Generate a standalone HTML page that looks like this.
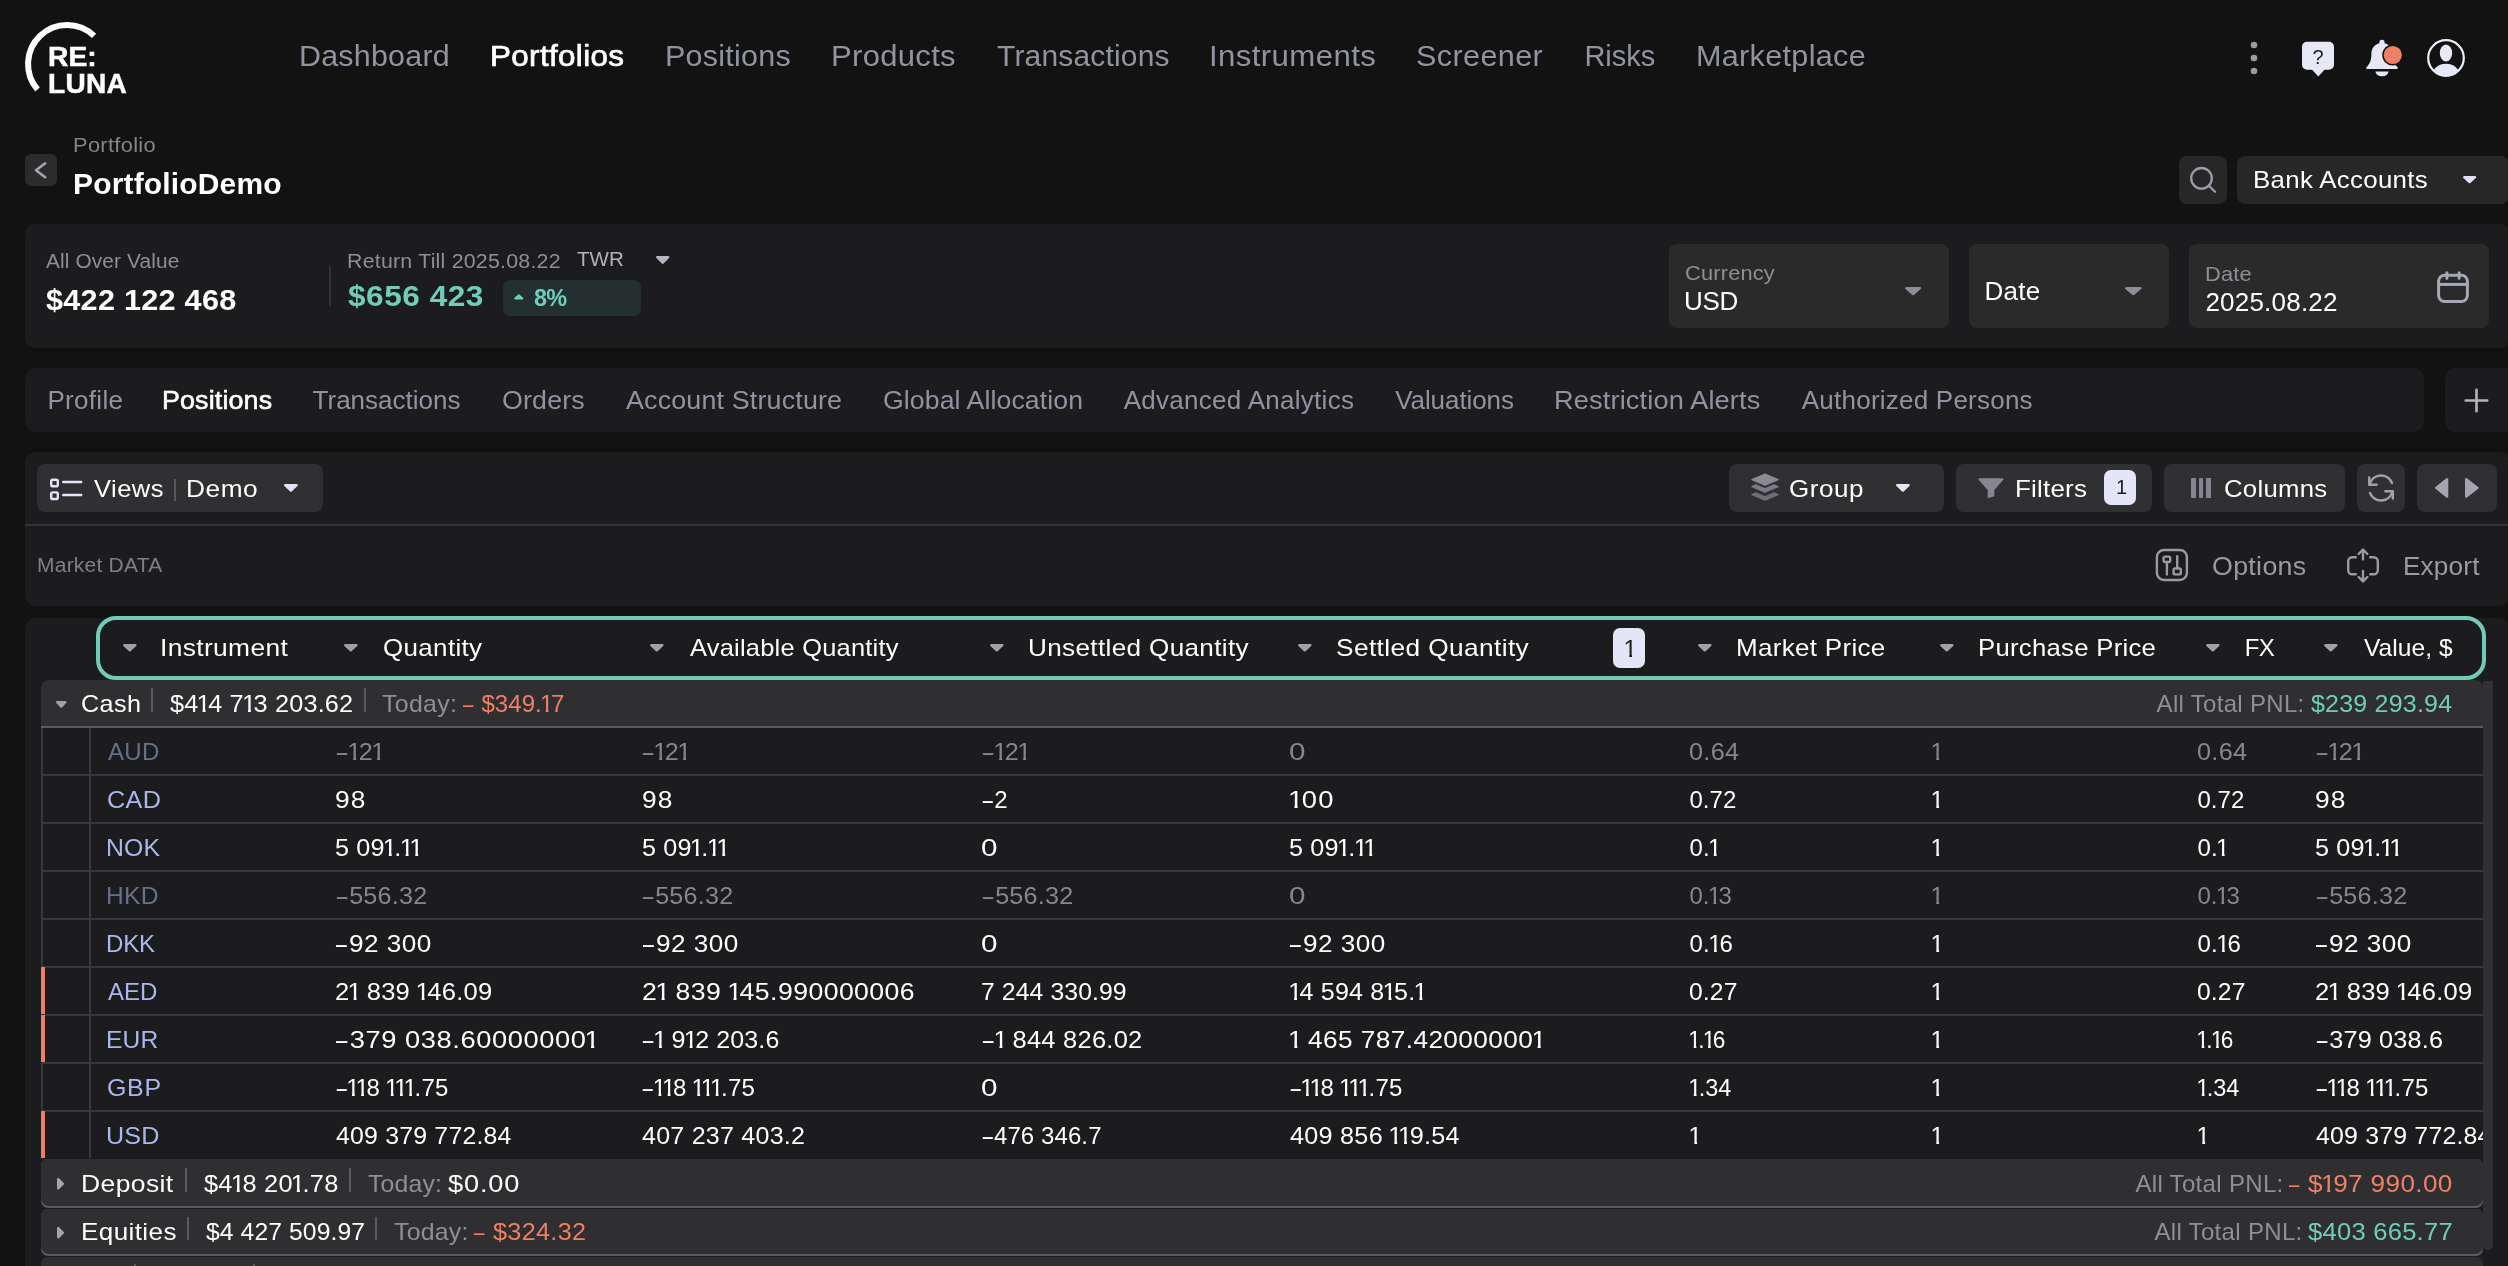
<!DOCTYPE html><html lang="en"><head><meta charset="utf-8"><title>Portfolio Positions</title><style>html,body{margin:0;padding:0}body{width:2508px;height:1266px;overflow:hidden;background:#121212;position:relative;font-family:"Liberation Sans",sans-serif}
.s{position:absolute;display:block}.t{position:absolute;white-space:pre;line-height:1;margin:0}#tx,.L{position:absolute;left:0;top:0;width:2508px;height:1266px;will-change:transform}
.clip{position:absolute;overflow:hidden}.t b{font-weight:inherit;display:inline-block;transform:scaleX(1.700);transform-origin:0 50%;margin-right:.22em}.t i{font-style:normal;display:inline-block;margin:0 -.105em 0 -.075em;clip-path:polygon(0 0,24px 0,24px 18px,8.500px 18px,8.500px 24px,5.700px 24px,5.700px 18px,0 18px)}</style></head><body>
<header class="L" aria-label="Main navigation">
<svg class="s" style="left:0px;top:0px" width="140" height="110" viewBox="0 0 140 110"><path d="M94.09 35.95 A39 39 0 0 0 37.57 89.59" fill="none" stroke="#fff" stroke-width="6"/></svg>
<svg class="s" style="left:2250px;top:41px" width="8" height="8" viewBox="0 0 8 8"><circle cx="4" cy="4" r="3.3" fill="#9a9aa2"/></svg>
<svg class="s" style="left:2250px;top:54px" width="8" height="8" viewBox="0 0 8 8"><circle cx="4" cy="4" r="3.3" fill="#9a9aa2"/></svg>
<svg class="s" style="left:2250px;top:67px" width="8" height="8" viewBox="0 0 8 8"><circle cx="4" cy="4" r="3.3" fill="#9a9aa2"/></svg>
<svg class="s" style="left:2300px;top:40px" width="36" height="38" viewBox="0 0 36 38"><path d="M7 1.7h22a5 5 0 0 1 5 5v18a5 5 0 0 1-5 5h-4.5l-6.2 6.8-6.2-6.8H7a5 5 0 0 1-5-5v-18a5 5 0 0 1 5-5z" fill="#e6e8f5"/></svg>
<svg class="s" style="left:2362px;top:38px" width="40" height="40" viewBox="0 0 40 40"><path d="M20 1.8a2.6 2.6 0 0 1 2.6 2.6v.9c5 1.2 8 5.400 8 10.700 0 7.200 2.200 10.500 5 13.200.6.600.2 1.800-.8 1.800H5.200c-1 0-1.400-1.200-.8-1.800 2.800-2.700 5-6 5-13.200 0-5.300 3-9.500 8-10.700v-.9A2.600 2.600 0 0 1 20 1.800z" fill="#e6e8f5"/>
<path d="M13.500 33.500h13a6.500 4.800 0 0 1-13 0z" fill="#e6e8f5"/>
<circle cx="30.800" cy="17" r="10.600" fill="#121212"/><circle cx="30.800" cy="17" r="9.100" fill="#ee8068"/></svg>
<svg class="s" style="left:2425px;top:37px" width="42" height="42" viewBox="0 0 42 42"><defs><clipPath id="uc"><circle cx="21" cy="21" r="17.200"/></clipPath></defs>
<circle cx="21" cy="21" r="17.800" fill="none" stroke="#eceef8" stroke-width="2.200"/>
<ellipse cx="21" cy="16" rx="6.200" ry="8.600" fill="#e6e8f5"/>
<ellipse cx="21" cy="38" rx="13.500" ry="11.200" fill="#e6e8f5" clip-path="url(#uc)"/></svg>
<span class="t" style="left:47.60px;top:44px;font-size:27px;color:#ffffff;font-weight:700;letter-spacing:0.025px;-webkit-text-stroke:0.5px #ffffff;transform:scaleX(1.0453);transform-origin:0 0;">RE:</span>
<span class="t" style="left:47.60px;top:71px;font-size:27px;color:#ffffff;font-weight:700;letter-spacing:0.265px;-webkit-text-stroke:0.5px #ffffff;transform:scaleX(1.0379);transform-origin:0 0;">LUNA</span>
<span class="t" style="left:299.40px;top:42px;font-size:29px;color:#9194a0;letter-spacing:0.230px;transform:scaleX(1.0484);transform-origin:0 0;">Dashboard</span>
<span class="t" style="left:490.10px;top:42px;font-size:29px;color:#ffffff;letter-spacing:0.336px;-webkit-text-stroke:0.7px #ffffff;transform:scaleX(1.0817);transform-origin:0 0;">Portfolios</span>
<span class="t" style="left:664.60px;top:42px;font-size:29px;color:#9194a0;letter-spacing:0.238px;transform:scaleX(1.0522);transform-origin:0 0;">Positions</span>
<span class="t" style="left:831.40px;top:42px;font-size:29px;color:#9194a0;letter-spacing:0.303px;transform:scaleX(1.0688);transform-origin:0 0;">Products</span>
<span class="t" style="left:997.29px;top:42px;font-size:29px;color:#9194a0;letter-spacing:0.181px;transform:scaleX(1.0335);transform-origin:0 0;">Transactions</span>
<span class="t" style="left:1209.07px;top:42px;font-size:29px;color:#9194a0;letter-spacing:0.359px;transform:scaleX(1.0753);transform-origin:0 0;">Instruments</span>
<span class="t" style="left:1416.35px;top:42px;font-size:29px;color:#9194a0;letter-spacing:0.359px;transform:scaleX(1.0547);transform-origin:0 0;">Screener</span>
<span class="t" style="left:1584.40px;top:42px;font-size:29px;color:#9194a0;letter-spacing:-0.037px;">Risks</span>
<span class="t" style="left:1696.40px;top:42px;font-size:29px;color:#9194a0;letter-spacing:0.297px;transform:scaleX(1.0542);transform-origin:0 0;">Marketplace</span>
<span class="t" style="left:2312.47px;top:47px;font-size:20px;color:#1c1c1e;">?</span>
</header>
<section class="L" aria-label="Portfolio title">
<div class="s" style="left:25px;top:154px;width:32px;height:32px;background:#2c2c2e;border-radius:6px;"></div>
<svg class="s" style="left:25px;top:154px" width="32" height="32" viewBox="0 0 32 32"><path d="M20.200 9.300 11 16.300l9.200 6.900" fill="none" stroke="#a4a4b0" stroke-width="2.600" stroke-linecap="round" stroke-linejoin="round"/></svg>
<div class="s" style="left:2179px;top:156px;width:48px;height:48px;background:#272728;border-radius:8px;"></div>
<svg class="s" style="left:2179px;top:156px" width="48" height="48" viewBox="0 0 48 48"><circle cx="22.500" cy="22.300" r="10.300" fill="none" stroke="#9c9ca6" stroke-width="2.300"/><path d="M30 29.800l6 6" stroke="#9c9ca6" stroke-width="2.300" stroke-linecap="round"/></svg>
<div class="s" style="left:2237px;top:156px;width:272px;height:48px;background:#272728;border-radius:8px;"></div>
<svg class="s" style="left:2461.5px;top:175.4px" width="15.2" height="9.3" viewBox="0 0 15.2 9.3"><polygon points="2.2,2.2 13.00,2.2 7.60,7.10" fill="#dfe1f5" stroke="#dfe1f5" stroke-width="2.4" stroke-linejoin="round"/></svg>
<span class="t" style="left:73.07px;top:135px;font-size:20px;color:#85858d;letter-spacing:0.285px;transform:scaleX(1.0922);transform-origin:0 0;">Portfolio</span>
<span class="t" style="left:72.80px;top:170px;font-size:29px;color:#ffffff;font-weight:700;letter-spacing:0.175px;transform:scaleX(1.0331);transform-origin:0 0;">PortfolioDemo</span>
<span class="t" style="left:2252.80px;top:168px;font-size:24px;color:#ffffff;letter-spacing:0.299px;transform:scaleX(1.0757);transform-origin:0 0;">Bank Accounts</span>
</section>
<section class="L" aria-label="Portfolio summary">
<div class="s" style="left:25px;top:224px;width:2484px;height:124px;background:#1c1c1e;border-radius:9px;"></div>
<div class="s" style="left:329.3px;top:266px;width:2.0px;height:40px;background:#333337;"></div>
<svg class="s" style="left:655.4px;top:255px" width="15.4" height="9.9" viewBox="0 0 15.4 9.9"><polygon points="2.2,2.2 13.20,2.2 7.70,7.70" fill="#b6b6c0" stroke="#b6b6c0" stroke-width="2.4" stroke-linejoin="round"/></svg>
<div class="s" style="left:503.2px;top:279.8px;width:137.9px;height:36.2px;background:#23302f;border-radius:7px;"></div>
<svg class="s" style="left:513.4px;top:293.4px" width="11.5" height="7.6" viewBox="0 0 11.5 7.6"><polygon points="2.2,5.40 9.30,5.40 5.75,2.2" fill="#6fcdb9" stroke="#6fcdb9" stroke-width="2" stroke-linejoin="round"/></svg>
<div class="s" style="left:1668.7px;top:244.2px;width:280.3px;height:83.8px;background:#2a2a2a;border-radius:8px;"></div>
<svg class="s" style="left:1903.8px;top:285.8px" width="18.2" height="10.3" viewBox="0 0 18.2 10.3"><polygon points="2.2,2.2 16.00,2.2 9.10,8.10" fill="#8e8e96" stroke="#8e8e96" stroke-width="2.4" stroke-linejoin="round"/></svg>
<div class="s" style="left:1968.8px;top:244.2px;width:200.2px;height:83.8px;background:#2a2a2a;border-radius:8px;"></div>
<svg class="s" style="left:2123.6px;top:285.8px" width="18.6" height="10.3" viewBox="0 0 18.6 10.3"><polygon points="2.2,2.2 16.40,2.2 9.30,8.10" fill="#8e8e96" stroke="#8e8e96" stroke-width="2.4" stroke-linejoin="round"/></svg>
<div class="s" style="left:2189.3px;top:244.2px;width:299.7px;height:83.8px;background:#2a2a2a;border-radius:8px;"></div>
<svg class="s" style="left:2433px;top:268px" width="40" height="38" viewBox="0 0 40 38"><rect x="5.600" y="7.300" width="28.800" height="26.200" rx="6" fill="none" stroke="#a6a8b4" stroke-width="3"/>
<path d="M5.600 16.400h28.800" stroke="#a6a8b4" stroke-width="3"/>
<path d="M13.900 4.700v5.600M26.100 4.700v5.600" stroke="#a6a8b4" stroke-width="3" stroke-linecap="round"/></svg>
<span class="t" style="left:46.40px;top:251px;font-size:20px;color:#8e8e96;letter-spacing:0.129px;transform:scaleX(1.0413);transform-origin:0 0;">All Over Value</span>
<span class="t" style="left:45.75px;top:286px;font-size:29px;color:#ffffff;font-weight:700;letter-spacing:0.248px;transform:scaleX(1.0560);transform-origin:0 0;">$422 122 468</span>
<span class="t" style="left:346.71px;top:251px;font-size:20px;color:#8e8e96;letter-spacing:0.207px;transform:scaleX(1.0674);transform-origin:0 0;">Return Till 2025.08.22</span>
<span class="t" style="left:576.70px;top:249px;font-size:20px;color:#b2b2ba;letter-spacing:0.042px;transform:scaleX(1.0278);transform-origin:0 0;">TWR</span>
<span class="t" style="left:347.75px;top:282px;font-size:29px;color:#6fcdb9;font-weight:700;letter-spacing:0.486px;transform:scaleX(1.0888);transform-origin:0 0;">$656 423</span>
<span class="t" style="left:534.15px;top:286px;font-size:24px;color:#6fcdb9;font-weight:700;letter-spacing:-0.754px;transform:scaleX(0.9746);transform-origin:0 0;">8%</span>
<span class="t" style="left:1685.10px;top:262px;font-size:21px;color:#8e8e96;letter-spacing:0.166px;transform:scaleX(1.0395);transform-origin:0 0;">Currency</span>
<span class="t" style="left:1684.10px;top:288px;font-size:26px;color:#ffffff;letter-spacing:-0.304px;">USD</span>
<span class="t" style="left:1984.40px;top:278px;font-size:26px;color:#ffffff;letter-spacing:0.333px;">Date</span>
<span class="t" style="left:2204.67px;top:263px;font-size:21px;color:#8e8e96;letter-spacing:0.121px;transform:scaleX(1.0423);transform-origin:0 0;">Date</span>
<span class="t" style="left:2205.40px;top:289px;font-size:26px;color:#ffffff;letter-spacing:0.222px;">2025.08.22</span>
</section>
<nav class="L" aria-label="Portfolio tabs">
<div class="s" style="left:25px;top:368.3px;width:2399.3px;height:63.4px;background:#1c1c1e;border-radius:10px;"></div>
<div class="s" style="left:2445px;top:368.3px;width:75px;height:63.4px;background:#1c1c1e;border-radius:10px;"></div>
<svg class="s" style="left:2464px;top:388px" width="25" height="25" viewBox="0 0 25 25"><path d="M12.500 1.700v21.600M1.700 12.500h21.600" stroke="#b4b4bc" stroke-width="2.600" stroke-linecap="round"/></svg>
<span class="t" style="left:47.40px;top:387px;font-size:26px;color:#9194a0;letter-spacing:0.318px;">Profile</span>
<span class="t" style="left:161.85px;top:387px;font-size:26px;color:#ffffff;letter-spacing:0.148px;-webkit-text-stroke:0.6px #ffffff;transform:scaleX(1.0319);transform-origin:0 0;">Positions</span>
<span class="t" style="left:312.59px;top:387px;font-size:26px;color:#9194a0;">Transactions</span>
<span class="t" style="left:501.70px;top:387px;font-size:26px;color:#9194a0;letter-spacing:0.205px;transform:scaleX(1.0279);transform-origin:0 0;">Orders</span>
<span class="t" style="left:626.40px;top:387px;font-size:26px;color:#9194a0;letter-spacing:0.161px;transform:scaleX(1.0324);transform-origin:0 0;">Account Structure</span>
<span class="t" style="left:882.70px;top:387px;font-size:26px;color:#9194a0;letter-spacing:0.080px;transform:scaleX(1.0258);transform-origin:0 0;">Global Allocation</span>
<span class="t" style="left:1123.70px;top:387px;font-size:26px;color:#9194a0;letter-spacing:0.281px;">Advanced Analytics</span>
<span class="t" style="left:1395.20px;top:387px;font-size:26px;color:#9194a0;letter-spacing:-0.076px;">Valuations</span>
<span class="t" style="left:1553.80px;top:387px;font-size:26px;color:#9194a0;letter-spacing:0.129px;transform:scaleX(1.0460);transform-origin:0 0;">Restriction Alerts</span>
<span class="t" style="left:1801.80px;top:387px;font-size:26px;color:#9194a0;letter-spacing:0.230px;">Authorized Persons</span>
</nav>
<section class="L" aria-label="Table toolbar">
<div class="s" style="left:25px;top:452px;width:2484px;height:153.7px;background:#1c1c1e;border-radius:10px;"></div>
<div class="s" style="left:25px;top:524px;width:2484px;height:2px;background:#333336;"></div>
<div class="s" style="left:37px;top:464px;width:286px;height:48px;background:#303032;border-radius:8px;"></div>
<svg class="s" style="left:46px;top:474px" width="40" height="30" viewBox="0 0 40 30"><rect x="5.200" y="5.700" width="6.600" height="6.600" rx="1.600" fill="none" stroke="#e2e4f6" stroke-width="2.400"/>
<rect x="5.200" y="18.400" width="6.600" height="6.600" rx="1.600" fill="none" stroke="#e2e4f6" stroke-width="2.400"/>
<path d="M17.200 8h18M17.200 21h18" stroke="#e2e4f6" stroke-width="2.400" stroke-linecap="round"/></svg>
<div class="s" style="left:174.3px;top:478.7px;width:1.7px;height:22.0px;background:#57575d;"></div>
<svg class="s" style="left:283.2px;top:483.2px" width="15.8" height="9.8" viewBox="0 0 15.8 9.8"><polygon points="2.2,2.2 13.60,2.2 7.90,7.60" fill="#e2e4f6" stroke="#e2e4f6" stroke-width="2.4" stroke-linejoin="round"/></svg>
<div class="s" style="left:1729px;top:464px;width:215px;height:48px;background:#303032;border-radius:8px;"></div>
<svg class="s" style="left:1750px;top:472px" width="30" height="32" viewBox="0 0 30 32"><path d="M15 2.100 28 7.600 15 13.100 2 7.600z" fill="#8a8a92" stroke="#8a8a92" stroke-width="1.500" stroke-linejoin="round"/>
<path d="M2 14.600l3.800-1.600 9.200 3.900 9.200-3.900 3.800 1.600-13 5.500z" fill="#7c7c84" stroke="#7c7c84" stroke-width="1.500" stroke-linejoin="round"/>
<path d="M2 22.600l3.800-1.600 9.200 3.900 9.200-3.900 3.800 1.600-13 5.500z" fill="#6e6e76" stroke="#6e6e76" stroke-width="1.500" stroke-linejoin="round"/></svg>
<svg class="s" style="left:1895px;top:483.2px" width="15.8" height="9.8" viewBox="0 0 15.8 9.8"><polygon points="2.2,2.2 13.60,2.2 7.90,7.60" fill="#e2e4f6" stroke="#e2e4f6" stroke-width="2.4" stroke-linejoin="round"/></svg>
<div class="s" style="left:1956px;top:464px;width:196px;height:48px;background:#303032;border-radius:8px;"></div>
<svg class="s" style="left:1976px;top:476px" width="30" height="24" viewBox="0 0 30 24"><path d="M3.400 2.200h23.200a1 1 0 0 1 .8 1.600L18.300 14v6.200l-6.600 2V14L2.600 3.800a1 1 0 0 1 .8-1.600z" fill="#86868e"/></svg>
<div class="s" style="left:2103.8px;top:469.7px;width:32.4px;height:35.8px;background:#e4e6f7;border-radius:7px;"></div>
<div class="s" style="left:2164.2px;top:464px;width:180.8px;height:48px;background:#303032;border-radius:8px;"></div>
<div class="s" style="left:2191.2px;top:478.3px;width:4.6px;height:19.5px;background:#86868e;border-radius:1px;"></div>
<div class="s" style="left:2198.8px;top:478.3px;width:4.6px;height:19.5px;background:#86868e;border-radius:1px;"></div>
<div class="s" style="left:2206.2px;top:478.3px;width:4.6px;height:19.5px;background:#86868e;border-radius:1px;"></div>
<div class="s" style="left:2357px;top:464px;width:48px;height:48px;background:#303032;border-radius:8px;"></div>
<svg class="s" style="left:2357px;top:464px" width="48" height="48" viewBox="0 0 48 48"><g fill="none" stroke="#a0a0aa" stroke-width="2.500" stroke-linecap="round" stroke-linejoin="round">
<path d="M12.600 20.500a11.800 11.800 0 0 1 22.400-1.500"/><path d="M35.400 27.500a11.800 11.800 0 0 1-22.400 1.500"/>
<path d="M12.200 13.400v7.400h7.400"/><path d="M35.800 34.600v-7.400h-7.400"/></g></svg>
<div class="s" style="left:2417px;top:464px;width:80px;height:48px;background:#303032;border-radius:8px;"></div>
<svg class="s" style="left:2434px;top:477.3px" width="15.3" height="21.7" viewBox="0 0 15.3 21.7"><polygon points="13.10,2.2 13.10,19.50 2.2,10.85" fill="#a4a4ae" stroke="#a4a4ae" stroke-width="2.4" stroke-linejoin="round"/></svg>
<svg class="s" style="left:2464px;top:477.3px" width="15.7" height="21.7" viewBox="0 0 15.7 21.7"><polygon points="2.2,2.2 2.2,19.50 13.50,10.85" fill="#a4a4ae" stroke="#a4a4ae" stroke-width="2.4" stroke-linejoin="round"/></svg>
<svg class="s" style="left:2154px;top:547px" width="36" height="36" viewBox="0 0 36 36"><g fill="none" stroke="#9a9aa4" stroke-width="2.400" stroke-linecap="round" stroke-linejoin="round">
<rect x="2.900" y="3" width="30" height="30" rx="7"/>
<rect x="9.600" y="9.600" width="6.600" height="5.400" rx="1.500"/><path d="M12.900 15v12.400"/>
<path d="M23.200 9.200v12.200"/><rect x="19.600" y="21.400" width="7.200" height="6" rx="1.500"/></g></svg>
<svg class="s" style="left:2345px;top:546px" width="36" height="38" viewBox="0 0 36 38"><g fill="none" stroke="#9a9aa4" stroke-width="2.400" stroke-linecap="round" stroke-linejoin="round">
<path d="M10.800 11.200H7.200a4 4 0 0 0-4 4v9a4 4 0 0 0 4 4h3.600"/><path d="M25.200 11.200h3.600a4 4 0 0 1 4 4v9a4 4 0 0 1-4 4h-3.600"/>
<path d="M18 3.600v9.800M13.600 8 18 3.600l4.400 4.400"/><path d="M18 25v10.400M13.600 31 18 35.400l4.400-4.400"/></g></svg>
<span class="t" style="left:94.10px;top:477px;font-size:24px;color:#ffffff;letter-spacing:0.407px;transform:scaleX(1.0655);transform-origin:0 0;">Views</span>
<span class="t" style="left:186.40px;top:477px;font-size:24px;color:#ffffff;letter-spacing:0.526px;transform:scaleX(1.0925);transform-origin:0 0;">Demo</span>
<span class="t" style="left:36.74px;top:555px;font-size:20px;color:#7f7f87;letter-spacing:0.210px;transform:scaleX(1.0505);transform-origin:0 0;">Market DATA</span>
<span class="t" style="left:1788.80px;top:477px;font-size:24px;color:#ffffff;letter-spacing:0.500px;transform:scaleX(1.0831);transform-origin:0 0;">Group</span>
<span class="t" style="left:2015.40px;top:477px;font-size:24px;color:#ffffff;letter-spacing:0.215px;transform:scaleX(1.0789);transform-origin:0 0;">Filters</span>
<span class="t" style="left:2116.10px;top:477px;font-size:20px;color:#1c1c1e;">1</span>
<span class="t" style="left:2224.40px;top:477px;font-size:24px;color:#ffffff;letter-spacing:0.290px;transform:scaleX(1.0702);transform-origin:0 0;">Columns</span>
<span class="t" style="left:2212.30px;top:554px;font-size:25px;color:#9a9aa4;letter-spacing:0.312px;transform:scaleX(1.0701);transform-origin:0 0;">Options</span>
<span class="t" style="left:2403.00px;top:554px;font-size:25px;color:#9a9aa4;letter-spacing:0.162px;transform:scaleX(1.0457);transform-origin:0 0;">Export</span>
</section>
<main class="L" aria-label="Positions table">
<div class="s" style="left:25px;top:618px;width:2484px;height:662px;background:#1c1c1e;border-radius:10px;"></div>
<div class="s" style="left:2483px;top:681px;width:10px;height:569px;background:#303032;border-radius:0 0 5px 5px;"></div>
<div class="s" style="left:41px;top:680px;width:2442px;height:48px;background:#2f2f31;border-radius:8px 8px 0 0;"></div>
<div class="s" style="left:41px;top:726px;width:2442px;height:2px;background:#5a5a62;"></div>
<svg class="s" style="left:54.7px;top:699.7px" width="12.5" height="8.8" viewBox="0 0 12.5 8.8"><polygon points="2.2,2.2 10.30,2.2 6.25,6.60" fill="#a0a0aa" stroke="#a0a0aa" stroke-width="2.4" stroke-linejoin="round"/></svg>
<div class="s" style="left:151px;top:688px;width:2px;height:23.5px;background:#5a5a62;"></div>
<div class="s" style="left:364px;top:688px;width:2px;height:23.5px;background:#5a5a62;"></div>
<div class="s" style="left:96.200px;top:615.700px;width:2390px;height:64.300px;box-sizing:border-box;border:4px solid #70ccb9;border-radius:20px;background:#1c1c1e"></div>
<svg class="s" style="left:121.5px;top:643.2px" width="15.6" height="9.5" viewBox="0 0 15.6 9.5"><polygon points="2.2,2.2 13.40,2.2 7.80,7.30" fill="#a0a0aa" stroke="#a0a0aa" stroke-width="2.4" stroke-linejoin="round"/></svg>
<svg class="s" style="left:343.2px;top:643.2px" width="15.6" height="9.5" viewBox="0 0 15.6 9.5"><polygon points="2.2,2.2 13.40,2.2 7.80,7.30" fill="#a0a0aa" stroke="#a0a0aa" stroke-width="2.4" stroke-linejoin="round"/></svg>
<svg class="s" style="left:649px;top:643.2px" width="15.6" height="9.5" viewBox="0 0 15.6 9.5"><polygon points="2.2,2.2 13.40,2.2 7.80,7.30" fill="#a0a0aa" stroke="#a0a0aa" stroke-width="2.4" stroke-linejoin="round"/></svg>
<svg class="s" style="left:989px;top:643.2px" width="15.6" height="9.5" viewBox="0 0 15.6 9.5"><polygon points="2.2,2.2 13.40,2.2 7.80,7.30" fill="#a0a0aa" stroke="#a0a0aa" stroke-width="2.4" stroke-linejoin="round"/></svg>
<svg class="s" style="left:1297.3px;top:643.2px" width="15.6" height="9.5" viewBox="0 0 15.6 9.5"><polygon points="2.2,2.2 13.40,2.2 7.80,7.30" fill="#a0a0aa" stroke="#a0a0aa" stroke-width="2.4" stroke-linejoin="round"/></svg>
<svg class="s" style="left:1697.3px;top:643.2px" width="15.6" height="9.5" viewBox="0 0 15.6 9.5"><polygon points="2.2,2.2 13.40,2.2 7.80,7.30" fill="#a0a0aa" stroke="#a0a0aa" stroke-width="2.4" stroke-linejoin="round"/></svg>
<svg class="s" style="left:1939px;top:643.2px" width="15.6" height="9.5" viewBox="0 0 15.6 9.5"><polygon points="2.2,2.2 13.40,2.2 7.80,7.30" fill="#a0a0aa" stroke="#a0a0aa" stroke-width="2.4" stroke-linejoin="round"/></svg>
<svg class="s" style="left:2205px;top:643.2px" width="15.6" height="9.5" viewBox="0 0 15.6 9.5"><polygon points="2.2,2.2 13.40,2.2 7.80,7.30" fill="#a0a0aa" stroke="#a0a0aa" stroke-width="2.4" stroke-linejoin="round"/></svg>
<svg class="s" style="left:2322.8px;top:643.2px" width="15.6" height="9.5" viewBox="0 0 15.6 9.5"><polygon points="2.2,2.2 13.40,2.2 7.80,7.30" fill="#a0a0aa" stroke="#a0a0aa" stroke-width="2.4" stroke-linejoin="round"/></svg>
<div class="s" style="left:1612.7px;top:628.3px;width:32.3px;height:39.4px;background:#e4e6f7;border-radius:7px;"></div>
<div class="s" style="left:41px;top:728px;width:2px;height:430px;background:#38383b;"></div>
<div class="s" style="left:89px;top:728px;width:2px;height:430px;background:#38383b;"></div>
<div class="s" style="left:41px;top:774px;width:2442px;height:2px;background:#38383b;"></div>
<div class="s" style="left:41px;top:822px;width:2442px;height:2px;background:#38383b;"></div>
<div class="s" style="left:41px;top:870px;width:2442px;height:2px;background:#38383b;"></div>
<div class="s" style="left:41px;top:918px;width:2442px;height:2px;background:#38383b;"></div>
<div class="s" style="left:41px;top:966px;width:2442px;height:2px;background:#38383b;"></div>
<div class="s" style="left:41px;top:1014px;width:2442px;height:2px;background:#38383b;"></div>
<div class="s" style="left:41px;top:967px;width:4px;height:47px;background:#ee7f66;"></div>
<div class="s" style="left:41px;top:1062px;width:2442px;height:2px;background:#38383b;"></div>
<div class="s" style="left:41px;top:1015px;width:4px;height:47px;background:#ee7f66;"></div>
<div class="s" style="left:41px;top:1110px;width:2442px;height:2px;background:#38383b;"></div>
<div class="s" style="left:41px;top:1111px;width:4px;height:47px;background:#ee7f66;"></div>
<div class="s" style="left:41px;top:1158.5px;width:2442px;height:49.3px;background:#5a5a62;border-radius:7px;"></div>
<div class="s" style="left:41px;top:1158.5px;width:2442px;height:47.3px;background:#2f2f31;border-radius:7px 7px 8px 8px;"></div>
<svg class="s" style="left:56.2px;top:1177.3px" width="9.1" height="13.5" viewBox="0 0 9.1 13.5"><polygon points="2.2,2.2 2.2,11.30 6.90,6.75" fill="#a4a4ae" stroke="#a4a4ae" stroke-width="2.4" stroke-linejoin="round"/></svg>
<div class="s" style="left:185px;top:1168.4px;width:2px;height:23.4px;background:#5a5a62;"></div>
<div class="s" style="left:349px;top:1168.4px;width:2px;height:23.4px;background:#5a5a62;"></div>
<div class="s" style="left:41px;top:1208.6px;width:2442px;height:47.0px;background:#5a5a62;border-radius:7px;"></div>
<div class="s" style="left:41px;top:1208.6px;width:2442px;height:45.0px;background:#2f2f31;border-radius:7px 7px 8px 8px;"></div>
<svg class="s" style="left:56.2px;top:1225.7px" width="9.1" height="13.5" viewBox="0 0 9.1 13.5"><polygon points="2.2,2.2 2.2,11.30 6.90,6.75" fill="#a4a4ae" stroke="#a4a4ae" stroke-width="2.4" stroke-linejoin="round"/></svg>
<div class="s" style="left:187px;top:1216.5px;width:2px;height:23.7px;background:#5a5a62;"></div>
<div class="s" style="left:375px;top:1216.5px;width:2px;height:23.7px;background:#5a5a62;"></div>
<div class="s" style="left:41px;top:1257px;width:2442px;height:43px;background:#2f2f31;border-radius:7px 7px 0 0;"></div>
<div class="s" style="left:134px;top:1263.5px;width:2px;height:26.5px;background:#5a5a62;"></div>
<div class="s" style="left:253px;top:1263.5px;width:2px;height:26.5px;background:#5a5a62;"></div>
<span class="t" style="left:81.10px;top:692px;font-size:24px;color:#ffffff;letter-spacing:0.425px;transform:scaleX(1.0486);transform-origin:0 0;">Cash</span>
<span class="t" style="left:170.40px;top:692px;font-size:24px;color:#ffffff;letter-spacing:0.170px;transform:scaleX(1.0526);transform-origin:0 0;">$4<i>1</i>4 7<i>1</i>3 203.62</span>
<span class="t" style="left:382.40px;top:692px;font-size:24px;color:#8e8e96;letter-spacing:0.300px;transform:scaleX(1.0370);transform-origin:0 0;">Today:</span>
<span class="t" style="left:462.90px;top:692px;font-size:24px;color:#ee7f66;transform:scaleX(0.7834);transform-origin:0 0;">–</span>
<span class="t" style="left:481.40px;top:692px;font-size:24px;color:#ee7f66;letter-spacing:0.068px;">$349.<i>1</i>7</span>
<span class="t" style="left:2156.60px;top:692px;font-size:24px;color:#8e8e96;letter-spacing:0.308px;">All Total PNL:</span>
<span class="t" style="left:2310.80px;top:692px;font-size:24px;color:#6fcdb9;letter-spacing:0.201px;transform:scaleX(1.0412);transform-origin:0 0;">$239 293.94</span>
<span class="t" style="left:160.40px;top:636px;font-size:24px;color:#ffffff;letter-spacing:0.325px;transform:scaleX(1.0988);transform-origin:0 0;">Instrument</span>
<span class="t" style="left:383.10px;top:636px;font-size:24px;color:#ffffff;letter-spacing:0.313px;transform:scaleX(1.0821);transform-origin:0 0;">Quantity</span>
<span class="t" style="left:690.40px;top:636px;font-size:24px;color:#ffffff;letter-spacing:0.224px;transform:scaleX(1.0591);transform-origin:0 0;">Available Quantity</span>
<span class="t" style="left:1028.40px;top:636px;font-size:24px;color:#ffffff;letter-spacing:0.312px;transform:scaleX(1.0881);transform-origin:0 0;">Unsettled Quantity</span>
<span class="t" style="left:1336.20px;top:636px;font-size:24px;color:#ffffff;letter-spacing:0.364px;transform:scaleX(1.0935);transform-origin:0 0;">Settled Quantity</span>
<span class="t" style="left:1736.10px;top:636px;font-size:24px;color:#ffffff;letter-spacing:0.293px;transform:scaleX(1.0820);transform-origin:0 0;">Market Price</span>
<span class="t" style="left:1978.40px;top:636px;font-size:24px;color:#ffffff;letter-spacing:0.269px;transform:scaleX(1.0700);transform-origin:0 0;">Purchase Price</span>
<span class="t" style="left:2244.65px;top:636px;font-size:24px;color:#ffffff;letter-spacing:-0.431px;">FX</span>
<span class="t" style="left:2364.20px;top:636px;font-size:24px;color:#ffffff;letter-spacing:0.063px;transform:scaleX(1.0227);transform-origin:0 0;">Value, $</span>
<span class="t" style="left:1625.40px;top:637px;font-size:24px;color:#1c1c1e;"><i>1</i></span>
<span class="t" style="left:107.90px;top:740px;font-size:24px;color:#66708c;letter-spacing:0.437px;">AUD</span>
<span class="t" style="left:334.55px;top:740px;font-size:24px;color:#86868c;letter-spacing:0.217px;transform:scaleX(1.0476);transform-origin:0 0;"><b>-</b><i>1</i>2<i>1</i></span>
<span class="t" style="left:641.05px;top:740px;font-size:24px;color:#86868c;letter-spacing:0.217px;transform:scaleX(1.0476);transform-origin:0 0;"><b>-</b><i>1</i>2<i>1</i></span>
<span class="t" style="left:980.55px;top:740px;font-size:24px;color:#86868c;letter-spacing:0.217px;transform:scaleX(1.0476);transform-origin:0 0;"><b>-</b><i>1</i>2<i>1</i></span>
<span class="t" style="left:1289.40px;top:740px;font-size:24px;color:#86868c;transform:scaleX(1.2342);transform-origin:0 0;">0</span>
<span class="t" style="left:1689.40px;top:740px;font-size:24px;color:#86868c;letter-spacing:0.280px;transform:scaleX(1.0521);transform-origin:0 0;">0.64</span>
<span class="t" style="left:1932.40px;top:740px;font-size:24px;color:#86868c;"><i>1</i></span>
<span class="t" style="left:2197.40px;top:740px;font-size:24px;color:#86868c;letter-spacing:0.280px;transform:scaleX(1.0521);transform-origin:0 0;">0.64</span>
<span class="t" style="left:2314.55px;top:740px;font-size:24px;color:#86868c;letter-spacing:0.217px;transform:scaleX(1.0476);transform-origin:0 0;"><b>-</b><i>1</i>2<i>1</i></span>
<span class="t" style="left:106.90px;top:788px;font-size:24px;color:#a9b8ea;letter-spacing:0.308px;transform:scaleX(1.0501);transform-origin:0 0;">CAD</span>
<span class="t" style="left:335.40px;top:788px;font-size:24px;color:#ffffff;letter-spacing:1.073px;transform:scaleX(1.0960);transform-origin:0 0;">98</span>
<span class="t" style="left:641.90px;top:788px;font-size:24px;color:#ffffff;letter-spacing:1.073px;transform:scaleX(1.0960);transform-origin:0 0;">98</span>
<span class="t" style="left:980.65px;top:788px;font-size:24px;color:#ffffff;letter-spacing:0.341px;"><b>-</b>2</span>
<span class="t" style="left:1289.83px;top:788px;font-size:24px;color:#ffffff;letter-spacing:1.158px;transform:scaleX(1.1400);transform-origin:0 0;"><i>1</i>00</span>
<span class="t" style="left:1689.47px;top:788px;font-size:24px;color:#ffffff;letter-spacing:0.051px;">0.72</span>
<span class="t" style="left:1932.40px;top:788px;font-size:24px;color:#ffffff;"><i>1</i></span>
<span class="t" style="left:2197.47px;top:788px;font-size:24px;color:#ffffff;letter-spacing:0.051px;">0.72</span>
<span class="t" style="left:2315.40px;top:788px;font-size:24px;color:#ffffff;letter-spacing:1.073px;transform:scaleX(1.0960);transform-origin:0 0;">98</span>
<span class="t" style="left:105.90px;top:836px;font-size:24px;color:#a9b8ea;letter-spacing:0.140px;transform:scaleX(1.0345);transform-origin:0 0;">NOK</span>
<span class="t" style="left:335.40px;top:836px;font-size:24px;color:#ffffff;letter-spacing:0.167px;transform:scaleX(1.0487);transform-origin:0 0;">5 09<i>1</i>.<i>1</i><i>1</i></span>
<span class="t" style="left:641.90px;top:836px;font-size:24px;color:#ffffff;letter-spacing:0.167px;transform:scaleX(1.0487);transform-origin:0 0;">5 09<i>1</i>.<i>1</i><i>1</i></span>
<span class="t" style="left:981.40px;top:836px;font-size:24px;color:#ffffff;transform:scaleX(1.2342);transform-origin:0 0;">0</span>
<span class="t" style="left:1289.40px;top:836px;font-size:24px;color:#ffffff;letter-spacing:0.167px;transform:scaleX(1.0487);transform-origin:0 0;">5 09<i>1</i>.<i>1</i><i>1</i></span>
<span class="t" style="left:1689.47px;top:836px;font-size:24px;color:#ffffff;letter-spacing:0.206px;">0.<i>1</i></span>
<span class="t" style="left:1932.40px;top:836px;font-size:24px;color:#ffffff;"><i>1</i></span>
<span class="t" style="left:2197.47px;top:836px;font-size:24px;color:#ffffff;letter-spacing:0.206px;">0.<i>1</i></span>
<span class="t" style="left:2315.40px;top:836px;font-size:24px;color:#ffffff;letter-spacing:0.167px;transform:scaleX(1.0487);transform-origin:0 0;">5 09<i>1</i>.<i>1</i><i>1</i></span>
<span class="t" style="left:105.90px;top:884px;font-size:24px;color:#66708c;letter-spacing:0.207px;transform:scaleX(1.0266);transform-origin:0 0;">HKD</span>
<span class="t" style="left:334.55px;top:884px;font-size:24px;color:#86868c;letter-spacing:0.198px;transform:scaleX(1.0492);transform-origin:0 0;"><b>-</b>556.32</span>
<span class="t" style="left:641.05px;top:884px;font-size:24px;color:#86868c;letter-spacing:0.198px;transform:scaleX(1.0492);transform-origin:0 0;"><b>-</b>556.32</span>
<span class="t" style="left:980.55px;top:884px;font-size:24px;color:#86868c;letter-spacing:0.198px;transform:scaleX(1.0492);transform-origin:0 0;"><b>-</b>556.32</span>
<span class="t" style="left:1289.40px;top:884px;font-size:24px;color:#86868c;transform:scaleX(1.2342);transform-origin:0 0;">0</span>
<span class="t" style="left:1689.47px;top:884px;font-size:24px;color:#86868c;letter-spacing:-0.005px;">0.<i>1</i>3</span>
<span class="t" style="left:1932.40px;top:884px;font-size:24px;color:#86868c;"><i>1</i></span>
<span class="t" style="left:2197.47px;top:884px;font-size:24px;color:#86868c;letter-spacing:-0.005px;">0.<i>1</i>3</span>
<span class="t" style="left:2314.55px;top:884px;font-size:24px;color:#86868c;letter-spacing:0.198px;transform:scaleX(1.0492);transform-origin:0 0;"><b>-</b>556.32</span>
<span class="t" style="left:105.95px;top:932px;font-size:24px;color:#a9b8ea;letter-spacing:-0.078px;">DKK</span>
<span class="t" style="left:334.45px;top:932px;font-size:24px;color:#ffffff;letter-spacing:0.447px;transform:scaleX(1.0886);transform-origin:0 0;"><b>-</b>92 300</span>
<span class="t" style="left:640.95px;top:932px;font-size:24px;color:#ffffff;letter-spacing:0.447px;transform:scaleX(1.0886);transform-origin:0 0;"><b>-</b>92 300</span>
<span class="t" style="left:981.40px;top:932px;font-size:24px;color:#ffffff;transform:scaleX(1.2342);transform-origin:0 0;">0</span>
<span class="t" style="left:1288.45px;top:932px;font-size:24px;color:#ffffff;letter-spacing:0.447px;transform:scaleX(1.0886);transform-origin:0 0;"><b>-</b>92 300</span>
<span class="t" style="left:1689.47px;top:932px;font-size:24px;color:#ffffff;letter-spacing:0.292px;">0.<i>1</i>6</span>
<span class="t" style="left:1932.40px;top:932px;font-size:24px;color:#ffffff;"><i>1</i></span>
<span class="t" style="left:2197.47px;top:932px;font-size:24px;color:#ffffff;letter-spacing:0.292px;">0.<i>1</i>6</span>
<span class="t" style="left:2314.45px;top:932px;font-size:24px;color:#ffffff;letter-spacing:0.447px;transform:scaleX(1.0886);transform-origin:0 0;"><b>-</b>92 300</span>
<span class="t" style="left:107.90px;top:980px;font-size:24px;color:#a9b8ea;letter-spacing:0.069px;">AED</span>
<span class="t" style="left:335.40px;top:980px;font-size:24px;color:#ffffff;letter-spacing:0.244px;transform:scaleX(1.0640);transform-origin:0 0;">2<i>1</i> 839 <i>1</i>46.09</span>
<span class="t" style="left:641.90px;top:980px;font-size:24px;color:#ffffff;letter-spacing:0.394px;transform:scaleX(1.1092);transform-origin:0 0;">2<i>1</i> 839 <i>1</i>45.990000006</span>
<span class="t" style="left:981.40px;top:980px;font-size:24px;color:#ffffff;letter-spacing:0.102px;transform:scaleX(1.0310);transform-origin:0 0;">7 244 330.99</span>
<span class="t" style="left:1289.80px;top:980px;font-size:24px;color:#ffffff;letter-spacing:0.181px;transform:scaleX(1.0432);transform-origin:0 0;"><i>1</i>4 594 8<i>1</i>5.<i>1</i></span>
<span class="t" style="left:1689.42px;top:980px;font-size:24px;color:#ffffff;letter-spacing:0.117px;transform:scaleX(1.0282);transform-origin:0 0;">0.27</span>
<span class="t" style="left:1932.40px;top:980px;font-size:24px;color:#ffffff;"><i>1</i></span>
<span class="t" style="left:2197.42px;top:980px;font-size:24px;color:#ffffff;letter-spacing:0.117px;transform:scaleX(1.0282);transform-origin:0 0;">0.27</span>
<span class="t" style="left:2315.40px;top:980px;font-size:24px;color:#ffffff;letter-spacing:0.244px;transform:scaleX(1.0640);transform-origin:0 0;">2<i>1</i> 839 <i>1</i>46.09</span>
<span class="t" style="left:105.90px;top:1028px;font-size:24px;color:#a9b8ea;letter-spacing:0.161px;transform:scaleX(1.0230);transform-origin:0 0;">EUR</span>
<span class="t" style="left:334.40px;top:1028px;font-size:24px;color:#ffffff;letter-spacing:0.515px;transform:scaleX(1.1366);transform-origin:0 0;"><b>-</b>379 038.60000000<i>1</i></span>
<span class="t" style="left:641.06px;top:1028px;font-size:24px;color:#ffffff;letter-spacing:0.119px;transform:scaleX(1.0417);transform-origin:0 0;"><b>-</b><i>1</i> 9<i>1</i>2 203.6</span>
<span class="t" style="left:980.52px;top:1028px;font-size:24px;color:#ffffff;letter-spacing:0.238px;transform:scaleX(1.0613);transform-origin:0 0;"><b>-</b><i>1</i> 844 826.02</span>
<span class="t" style="left:1290.40px;top:1028px;font-size:24px;color:#ffffff;letter-spacing:0.372px;transform:scaleX(1.0932);transform-origin:0 0;"><i>1</i> 465 787.42000000<i>1</i></span>
<span class="t" style="left:1690.40px;top:1028px;font-size:24px;color:#ffffff;letter-spacing:-0.206px;transform:scaleX(0.9429);transform-origin:0 0;"><i>1</i>.<i>1</i>6</span>
<span class="t" style="left:1932.40px;top:1028px;font-size:24px;color:#ffffff;"><i>1</i></span>
<span class="t" style="left:2198.40px;top:1028px;font-size:24px;color:#ffffff;letter-spacing:-0.206px;transform:scaleX(0.9429);transform-origin:0 0;"><i>1</i>.<i>1</i>6</span>
<span class="t" style="left:2314.55px;top:1028px;font-size:24px;color:#ffffff;letter-spacing:0.210px;transform:scaleX(1.0507);transform-origin:0 0;"><b>-</b>379 038.6</span>
<span class="t" style="left:106.90px;top:1076px;font-size:24px;color:#a9b8ea;letter-spacing:0.655px;transform:scaleX(1.0413);transform-origin:0 0;">GBP</span>
<span class="t" style="left:334.65px;top:1076px;font-size:24px;color:#ffffff;letter-spacing:0.173px;"><b>-</b><i>1</i><i>1</i>8 <i>1</i><i>1</i><i>1</i>.75</span>
<span class="t" style="left:641.15px;top:1076px;font-size:24px;color:#ffffff;letter-spacing:0.173px;"><b>-</b><i>1</i><i>1</i>8 <i>1</i><i>1</i><i>1</i>.75</span>
<span class="t" style="left:981.40px;top:1076px;font-size:24px;color:#ffffff;transform:scaleX(1.2342);transform-origin:0 0;">0</span>
<span class="t" style="left:1288.65px;top:1076px;font-size:24px;color:#ffffff;letter-spacing:0.173px;"><b>-</b><i>1</i><i>1</i>8 <i>1</i><i>1</i><i>1</i>.75</span>
<span class="t" style="left:1690.40px;top:1076px;font-size:24px;color:#ffffff;letter-spacing:-0.014px;transform:scaleX(0.9768);transform-origin:0 0;"><i>1</i>.34</span>
<span class="t" style="left:1932.40px;top:1076px;font-size:24px;color:#ffffff;"><i>1</i></span>
<span class="t" style="left:2198.40px;top:1076px;font-size:24px;color:#ffffff;letter-spacing:-0.014px;transform:scaleX(0.9768);transform-origin:0 0;"><i>1</i>.34</span>
<span class="t" style="left:2314.65px;top:1076px;font-size:24px;color:#ffffff;letter-spacing:0.173px;"><b>-</b><i>1</i><i>1</i>8 <i>1</i><i>1</i><i>1</i>.75</span>
<span class="t" style="left:105.99px;top:1124px;font-size:24px;color:#a9b8ea;letter-spacing:0.181px;transform:scaleX(1.0479);transform-origin:0 0;">USD</span>
<span class="t" style="left:335.90px;top:1124px;font-size:24px;color:#ffffff;letter-spacing:0.190px;transform:scaleX(1.0361);transform-origin:0 0;">409 379 772.84</span>
<span class="t" style="left:642.39px;top:1124px;font-size:24px;color:#ffffff;letter-spacing:0.226px;transform:scaleX(1.0430);transform-origin:0 0;">407 237 403.2</span>
<span class="t" style="left:980.65px;top:1124px;font-size:24px;color:#ffffff;letter-spacing:0.088px;"><b>-</b>476 346.7</span>
<span class="t" style="left:1289.89px;top:1124px;font-size:24px;color:#ffffff;letter-spacing:0.268px;transform:scaleX(1.0484);transform-origin:0 0;">409 856 <i>1</i><i>1</i>9.54</span>
<span class="t" style="left:1690.40px;top:1124px;font-size:24px;color:#ffffff;"><i>1</i></span>
<span class="t" style="left:1932.40px;top:1124px;font-size:24px;color:#ffffff;"><i>1</i></span>
<span class="t" style="left:2198.40px;top:1124px;font-size:24px;color:#ffffff;"><i>1</i></span>
<div class="clip" style="left:2312px;top:1118px;width:171px;height:36px"><span class="t" style="left:3.90px;top:6px;font-size:24px;color:#ffffff;letter-spacing:0.190px;transform:scaleX(1.0361);transform-origin:0 0;">409 379 772.84</span></div>
<span class="t" style="left:80.60px;top:1172px;font-size:24px;color:#ffffff;letter-spacing:0.377px;transform:scaleX(1.1021);transform-origin:0 0;">Deposit</span>
<span class="t" style="left:203.80px;top:1172px;font-size:24px;color:#ffffff;letter-spacing:0.229px;transform:scaleX(1.0556);transform-origin:0 0;">$4<i>1</i>8 20<i>1</i>.78</span>
<span class="t" style="left:367.90px;top:1172px;font-size:24px;color:#8e8e96;letter-spacing:0.192px;transform:scaleX(1.0315);transform-origin:0 0;">Today:</span>
<span class="t" style="left:448.37px;top:1172px;font-size:24px;color:#ffffff;letter-spacing:0.718px;transform:scaleX(1.1335);transform-origin:0 0;">$0.00</span>
<span class="t" style="left:2135.40px;top:1172px;font-size:24px;color:#8e8e96;letter-spacing:0.324px;">All Total PNL:</span>
<span class="t" style="left:2289.40px;top:1172px;font-size:24px;color:#ee7f66;transform:scaleX(0.7834);transform-origin:0 0;">–</span>
<span class="t" style="left:2308.40px;top:1172px;font-size:24px;color:#ee7f66;letter-spacing:0.351px;transform:scaleX(1.0880);transform-origin:0 0;">$<i>1</i>97 990.00</span>
<span class="t" style="left:80.60px;top:1220px;font-size:24px;color:#ffffff;letter-spacing:0.364px;transform:scaleX(1.0853);transform-origin:0 0;">Equities</span>
<span class="t" style="left:205.70px;top:1220px;font-size:24px;color:#ffffff;letter-spacing:0.086px;transform:scaleX(1.0292);transform-origin:0 0;">$4 427 509.97</span>
<span class="t" style="left:393.90px;top:1220px;font-size:24px;color:#8e8e96;letter-spacing:0.233px;transform:scaleX(1.0348);transform-origin:0 0;">Today:</span>
<span class="t" style="left:474.40px;top:1220px;font-size:24px;color:#ee7f66;transform:scaleX(0.7834);transform-origin:0 0;">–</span>
<span class="t" style="left:492.90px;top:1220px;font-size:24px;color:#ee7f66;letter-spacing:0.304px;transform:scaleX(1.0497);transform-origin:0 0;">$324.32</span>
<span class="t" style="left:2154.40px;top:1220px;font-size:24px;color:#8e8e96;letter-spacing:0.324px;">All Total PNL:</span>
<span class="t" style="left:2308.40px;top:1220px;font-size:24px;color:#6fcdb9;letter-spacing:0.233px;transform:scaleX(1.0653);transform-origin:0 0;">$403 665.77</span>
</main>
</body></html>
